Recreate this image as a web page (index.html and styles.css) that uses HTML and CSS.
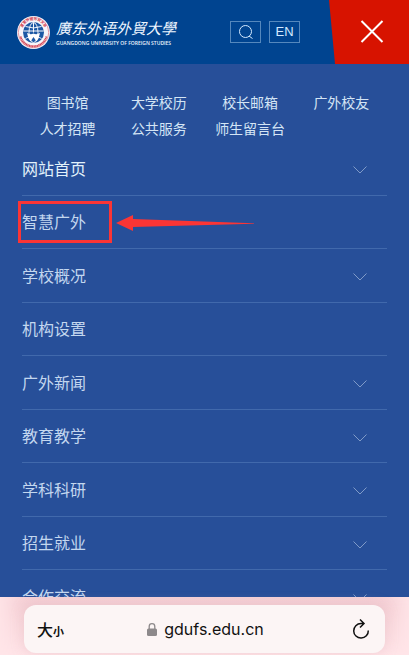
FILE: index.html
```html
<!DOCTYPE html>
<html lang="zh-CN">
<head>
<meta charset="utf-8">
<meta name="viewport" content="width=device-width, initial-scale=1">
<title>广东外语外贸大学</title>
<link rel="stylesheet" href="styles.css">
</head>
<body>
<header class="site-header">
  <a class="brand" href="#">
    <svg class="emblem" viewBox="0 0 66 66" aria-hidden="true">
      <defs>
        <path id="ring-top" d="M11 38A23 23 0 1 1 55 38"/>
      </defs>
      <circle cx="33" cy="33" r="33" fill="#f7f5fa"/>
      <circle cx="33" cy="33" r="30.5" fill="none" stroke="#df7884" stroke-width="1.5"/>
      <text class="ring-name"><textPath href="#ring-top" startOffset="50%" text-anchor="middle">廣東外語外貿大學</textPath></text>
      <path d="M7 41A27 27 0 0 0 59 41" fill="none" stroke="#d64554" stroke-width="4" stroke-dasharray="2.4 .8"/>
      <circle cx="33" cy="33" r="21" fill="#1c58a4"/>
      <g fill="none" stroke="#f5f7fc" stroke-width="2">
        <ellipse cx="33" cy="33" rx="9" ry="20"/>
        <path d="M33 13v20M13 30h40M17 21q16 6 32 0M17 45q5-3 9-3M49 45q-5-3-9-3"/>
      </g>
      <path d="M20 34q7 4 13 1q6 3 13-1l-3 11-4 6-6-9-6 9-4-6z" fill="#fff"/>
    </svg>
    <span class="brand-text">
      <span class="brand-name">廣东外语外貿大學</span>
      <span class="brand-en" lang="en">GUANGDONG UNIVERSITY OF FOREIGN STUDIES</span>
    </span>
  </a>
  <div class="tools">
    <button class="tool" type="button" aria-label="搜索">
      <svg class="search-icon" viewBox="0 0 16 16" aria-hidden="true"><circle cx="7.5" cy="7.5" r="6"/><path d="M11 12l3.500 2.500"/></svg>
    </button>
    <button class="tool" type="button" lang="en">EN</button>
  </div>
  <button class="close" type="button" aria-label="关闭菜单">
    <svg class="close-icon" viewBox="0 0 24 24" aria-hidden="true"><path d="M1.500 1l21 21M22.500 1l-21 21"/></svg>
  </button>
</header>

<main class="menu">
  <nav class="quick-links" aria-label="快捷链接">
    <a href="#">图书馆</a><a href="#">大学校历</a><a href="#">校长邮箱</a><a href="#">广外校友</a>
    <a href="#">人才招聘</a><a href="#">公共服务</a><a href="#">师生留言台</a>
  </nav>
  <nav aria-label="主导航">
    <ul class="nav-list">
      <li class="nav-item current"><a href="#">网站首页</a><svg class="chevron" viewBox="0 0 14 8" aria-hidden="true"><path d="M.5.5L7 7 13.5.5"/></svg></li>
      <li class="nav-item"><a href="#">智慧广外</a>
        <span class="callout">
          <span class="callout-box"></span>
          <svg class="callout-arrow" viewBox="0 0 138 16" aria-hidden="true"><path d="M0 8L17 0V4L138 8.200V8.800L17 12V16z"/></svg>
        </span>
      </li>
      <li class="nav-item"><a href="#">学校概况</a><svg class="chevron" viewBox="0 0 14 8" aria-hidden="true"><path d="M.5.5L7 7 13.5.5"/></svg></li>
      <li class="nav-item"><a href="#">机构设置</a></li>
      <li class="nav-item"><a href="#">广外新闻</a><svg class="chevron" viewBox="0 0 14 8" aria-hidden="true"><path d="M.5.5L7 7 13.5.5"/></svg></li>
      <li class="nav-item"><a href="#">教育教学</a><svg class="chevron" viewBox="0 0 14 8" aria-hidden="true"><path d="M.5.5L7 7 13.5.5"/></svg></li>
      <li class="nav-item"><a href="#">学科科研</a><svg class="chevron" viewBox="0 0 14 8" aria-hidden="true"><path d="M.5.5L7 7 13.5.5"/></svg></li>
      <li class="nav-item"><a href="#">招生就业</a><svg class="chevron" viewBox="0 0 14 8" aria-hidden="true"><path d="M.5.5L7 7 13.5.5"/></svg></li>
      <li class="nav-item"><a href="#">合作交流</a><svg class="chevron" viewBox="0 0 14 8" aria-hidden="true"><path d="M.5.5L7 7 13.5.5"/></svg></li>
    </ul>
  </nav>
</main>

<footer class="browser-bar">
  <div class="address">
    <button class="text-size" type="button">大<small>小</small></button>
    <span class="url">
      <svg class="lock" viewBox="0 0 10 13" aria-hidden="true"><rect y="5.500" width="10" height="7.500" rx="1.500" fill="#8d898b"/><path d="M2.200 6V3.500a2.800 2.800 0 0 1 5.600 0V6" fill="none" stroke="#8d898b" stroke-width="1.300"/></svg>
      <span>gdufs.edu.cn</span>
    </span>
    <button class="reload" type="button" aria-label="重新加载">
      <svg viewBox="0 0 18 22" aria-hidden="true"><path d="M11 5.500H9A7.300 7.300 0 1 0 16.300 12.500M8 1.500l4 4-4 4"/></svg>
    </button>
  </div>
</footer>
</body>
</html>
```
FILE: styles.css
```css
* {
  box-sizing: border-box;
}

body {
  display: flex;
  flex-direction: column;
  height: 100vh;
  margin: 0;
  overflow: hidden;
  background: #274f99;
  color: #d4e5f5;
  font-family: "Liberation Sans", "Noto Sans CJK SC", sans-serif;
}

a {
  color: inherit;
  text-decoration: none;
}

button {
  padding: 0;
  border: 0;
  background: none;
  color: inherit;
  font: inherit;
}

svg {
  display: block;
}

.site-header {
  display: flex;
  flex: none;
  align-items: center;
  height: 64px;
  padding-left: 17px;
  background: #004490;
}

.brand {
  display: flex;
  align-items: center;
  gap: 6px;
  color: #eef6ff;
}

.emblem {
  width: 33px;
  height: 33px;
}

.ring-name {
  fill: #cf3546;
  font: bold 7px "Noto Sans CJK TC", sans-serif;
}

.brand-text {
  display: flex;
  flex-direction: column;
  white-space: nowrap;
}

.brand-name {
  font: italic 400 15px/22px "Noto Sans CJK TC", sans-serif;
}

.brand-en {
  font: 600 5px/8px "Open Sans", sans-serif;
}

.tools {
  display: flex;
  gap: 8px;
  margin-left: auto;
}

.tool {
  display: grid;
  place-items: center;
  width: 31px;
  height: 22px;
  border: 1px solid #5588bd;
  color: #d4eaff;
  font-size: 13px;
  line-height: 20px;
}

.search-icon {
  width: 16px;
  height: 16px;
  fill: none;
  stroke: currentColor;
}

.close {
  display: grid;
  place-items: center;
  width: 80px;
  height: 64px;
  margin-left: 29px;
  padding-left: 6px;
  background: #d71300;
  clip-path: polygon(0 0, 100% 0, 100% 100%, 6px 100%);
}

.close-icon {
  width: 24px;
  height: 24px;
  fill: none;
  stroke: #fff;
  stroke-width: 2;
}

.menu {
  flex: 1;
  min-height: 0;
  padding: 26px 22px 0;
  overflow: hidden;
}

.quick-links {
  display: grid;
  grid-template-columns: repeat(4, 1fr);
  font-size: 14px;
  line-height: 26px;
  text-align: center;
  white-space: nowrap;
}

.nav-list {
  margin: 0;
  padding: 0;
  list-style: none;
}

.nav-item {
  position: relative;
  display: flex;
  align-items: center;
  justify-content: space-between;
  height: 53px;
  padding: 0 20px 2px 0;
  border-bottom: 1px solid #4169ac;
  color: #c3d7ef;
  font-size: 16px;
}

.nav-item:nth-child(odd) {
  height: 54px;
}

.nav-item.current {
  color: #e2f2fb;
}

.chevron {
  width: 14px;
  height: 8px;
  margin-top: 5px;
  fill: none;
  stroke: #809bc8;
}

.callout {
  position: absolute;
  top: 5px;
  left: -4px;
  display: flex;
  align-items: center;
  gap: 4px;
}

.callout-box {
  width: 94px;
  height: 42px;
  border: 3px solid #fb3535;
}

.callout-arrow {
  width: 138px;
  height: 16px;
  margin-top: 2px;
  fill: #fb3535;
}

.browser-bar {
  flex: none;
  padding: 8px 24px 2px;
  background: linear-gradient(#f2c7ce, #ffe2e6);
  box-shadow: inset 24px 0 24px -12px #ffe6e9, inset -24px 0 24px -12px #ffe6e9;
}

.address {
  display: grid;
  grid-template-columns: 1fr auto 1fr;
  align-items: center;
  height: 48px;
  padding: 0 15px 0 13px;
  border-radius: 12px;
  background: #fcf5f5;
  box-shadow: 0 0 12px #e5bfc680;
  color: #111;
}

.text-size {
  justify-self: start;
  font-size: 16px;
  font-weight: 500;
}

.text-size small {
  font-size: 11px;
  font-weight: 700;
}

.url {
  display: flex;
  align-items: center;
  gap: 7px;
  padding-left: 4px;
  font: 16px/20px Inter, sans-serif;
}

.lock {
  width: 10px;
  height: 13px;
}

.reload {
  justify-self: end;
}

.reload svg {
  width: 18px;
  height: 22px;
  fill: none;
  stroke: #111;
  stroke-width: 1.5;
}
```
